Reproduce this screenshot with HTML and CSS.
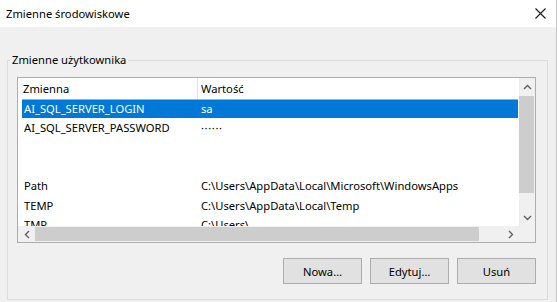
FILE: index.html
```html
<!DOCTYPE html>
<html lang="pl">

<head>
    <meta charset="UTF-8">
    <meta name="viewport" content="width=device-width, initial-scale=1.0">
    <title>Zmienne środowiskowe</title>
    <link rel="stylesheet" href="styles.css">
</head>

<body>
    <div class="window">
        <div class="titlebar">
            <span class="title">Zmienne środowiskowe</span>
            <svg class="close" width="11" height="11" viewBox="0 0 11 11">
                <path d="M0.5 0.5L10.5 10.5M10.5 0.5L0.5 10.5" stroke="#1a1a1a" stroke-width="1.1" fill="none" />
            </svg>
        </div>

        <div class="dialog-body">
            <fieldset class="group">
                <legend>Zmienne użytkownika</legend>

                <div class="list">
                    <div class="list-main">
                        <div class="list-header">
                            <div class="col-name">Zmienna</div>
                            <div class="col-value">Wartość</div>
                        </div>
                        <div class="row selected">
                            <div class="col-name">AI_SQL_SERVER_LOGIN</div>
                            <div class="col-value">sa</div>
                        </div>
                        <div class="row">
                            <div class="col-name">AI_SQL_SERVER_PASSWORD</div>
                            <div class="col-value dots">······</div>
                        </div>
                        <div class="row"></div>
                        <div class="row"></div>
                        <div class="row">
                            <div class="col-name">Path</div>
                            <div class="col-value">C:\Users\AppData\Local\Microsoft\WindowsApps</div>
                        </div>
                        <div class="row">
                            <div class="col-name">TEMP</div>
                            <div class="col-value">C:\Users\AppData\Local\Temp</div>
                        </div>
                        <div class="row">
                            <div class="col-name">TMP</div>
                            <div class="col-value">C:\Users\</div>
                        </div>
                    </div>

                    <!-- vertical scrollbar -->
                    <div class="vscroll">
                        <div class="arrow">
                            <svg width="9" height="6" viewBox="0 0 9 6"><path d="M1 5L4.5 1.5L8 5" stroke="#606060" stroke-width="1.4" fill="none" /></svg>
                        </div>
                        <div class="track"><div class="vthumb"></div></div>
                        <div class="arrow">
                            <svg width="9" height="6" viewBox="0 0 9 6"><path d="M1 1L4.5 4.5L8 1" stroke="#606060" stroke-width="1.4" fill="none" /></svg>
                        </div>
                    </div>

                    <!-- horizontal scrollbar -->
                    <div class="hscroll">
                        <div class="arrow">
                            <svg width="6" height="9" viewBox="0 0 6 9"><path d="M5 1L1.5 4.5L5 8" stroke="#606060" stroke-width="1.4" fill="none" /></svg>
                        </div>
                        <div class="track"><div class="hthumb"></div></div>
                        <div class="arrow">
                            <svg width="6" height="9" viewBox="0 0 6 9"><path d="M1 1L4.5 4.5L1 8" stroke="#606060" stroke-width="1.4" fill="none" /></svg>
                        </div>
                    </div>
                    <div class="corner"></div>
                </div>

                <div class="button-group">
                    <button>Nowa…</button>
                    <button>Edytuj…</button>
                    <button>Usuń</button>
                </div>
            </fieldset>
        </div>
    </div>
</body>

</html>
```

FILE: styles.css
```css
body {
    margin: 0;
    font-family: "Noto Sans", "Open Sans", sans-serif;
    font-size: 11.2px;
    color: #000;
    background-color: #f0f0f0;
}

.window {
    width: 557px;
    height: 302px;
    box-sizing: border-box;
    border-right: 1px solid #c8c8c8;
    overflow: hidden;
}

.titlebar {
    height: 27px;
    background-color: white;
    display: flex;
    align-items: center;
    justify-content: space-between;
    padding: 0 10px 0 6px;
}

.close {
    display: block;
}

.dialog-body {
    padding: 25px 0 0 7px;
}

.group {
    width: 541px;
    box-sizing: border-box;
    margin: 0;
    border: 1px solid #dcdcdc;
    padding: 9px 11px 15px 9px;
}

.group legend {
    margin-left: -7px;
    padding: 0 2px;
    line-height: 16px;
}

.list {
    display: grid;
    grid-template-columns: 1fr 16px;
    grid-template-rows: 148px 16px;
    border: 1px solid #adadad;
    background-color: white;
}

.list-main {
    overflow: hidden;
}

.list-header {
    display: flex;
    height: 21px;
    align-items: center;
    padding-left: 5px;
}

.list-header .col-name {
    width: 174px;
    border-right: 1px solid #e5e5e5;
    height: 21px;
    line-height: 21px;
}

.list-header .col-value {
    padding-left: 3px;
}

.row {
    display: flex;
    height: 19.3px;
    align-items: center;
    margin: 0 1px 0 4px;
    white-space: nowrap;
}

.row .col-name {
    width: 175px;
    padding-left: 2px;
    box-sizing: border-box;
}

.row .col-value {
    padding-left: 4px;
}

.row.selected {
    background-color: #0078d7;
    color: white;
    box-shadow: inset 0 1px 0 #7fb8ea;
}

.dots {
    letter-spacing: 0.6px;
}

.vscroll {
    display: flex;
    flex-direction: column;
    background-color: #f0f0f0;
}

.vscroll .arrow {
    height: 17px;
    display: flex;
    align-items: center;
    justify-content: center;
}

.vscroll .track {
    flex: 1;
    padding-top: 1px;
}

.vthumb {
    width: 15px;
    height: 97px;
    background-color: #cdcdcd;
}

.hscroll {
    display: flex;
    background-color: #f0f0f0;
}

.hscroll .arrow {
    width: 17px;
    display: flex;
    align-items: center;
    justify-content: center;
}

.hscroll .track {
    flex: 1;
    padding: 1px 0;
}

.hthumb {
    width: 444px;
    height: 14px;
    background-color: #cdcdcd;
}

.corner {
    background-color: #f0f0f0;
}

.button-group {
    display: flex;
    justify-content: flex-end;
    gap: 8px;
    margin-top: 15px;
}

button {
    width: 79px;
    height: 26px;
    border: 1px solid #adadad;
    background-color: #e1e1e1;
    font-family: "Noto Sans", "Open Sans", sans-serif;
    font-size: 11.2px;
    color: #000;
    padding: 0;
}
```
